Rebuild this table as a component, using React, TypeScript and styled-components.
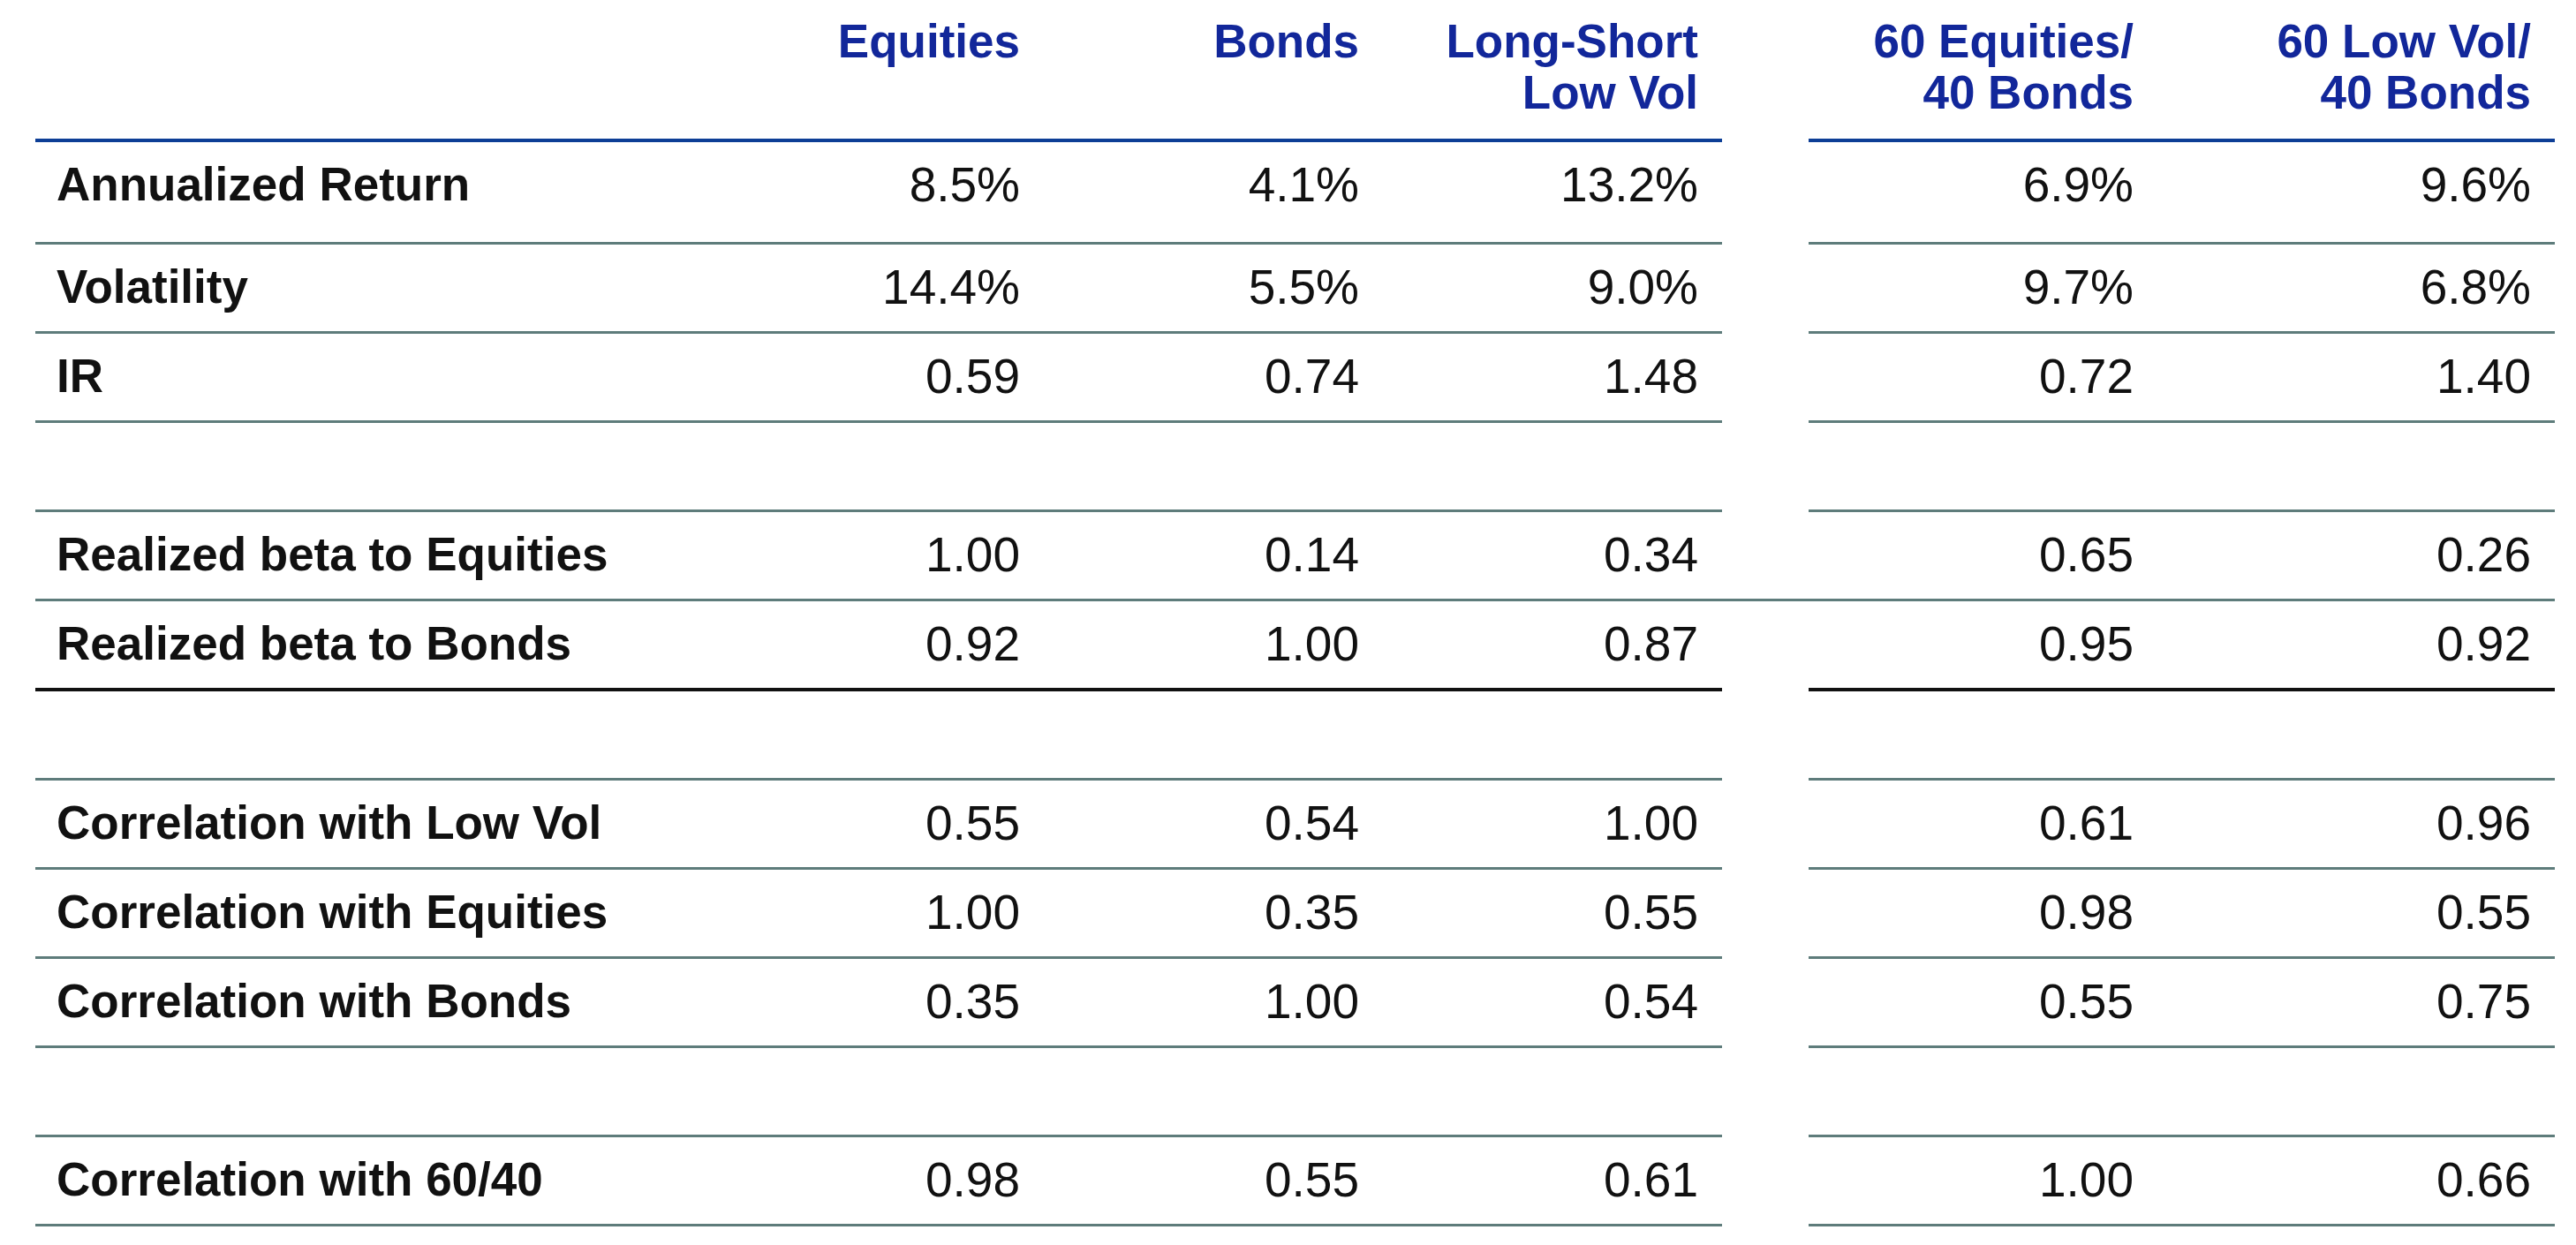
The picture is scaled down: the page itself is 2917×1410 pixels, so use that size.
import styled, { createGlobalStyle } from 'styled-components';

type Rule = 'blue' | 'gray' | 'black' | 'none';

type DataRow = {
  label?: string;
  values?: string[];
  tall?: boolean;
  bridge?: boolean;
  rule?: Rule;
};

const headers = ['Equities', 'Bonds', 'Long-Short\nLow Vol', '60 Equities/\n40 Bonds', '60 Low Vol/\n40 Bonds'];

const rows: DataRow[] = [
  { label: 'Annualized Return', values: ['8.5%', '4.1%', '13.2%', '6.9%', '9.6%'], tall: true },
  { label: 'Volatility', values: ['14.4%', '5.5%', '9.0%', '9.7%', '6.8%'] },
  { label: 'IR', values: ['0.59', '0.74', '1.48', '0.72', '1.40'] },
  {},
  { label: 'Realized beta to Equities', values: ['1.00', '0.14', '0.34', '0.65', '0.26'], bridge: true },
  { label: 'Realized beta to Bonds', values: ['0.92', '1.00', '0.87', '0.95', '0.92'], rule: 'black' },
  {},
  { label: 'Correlation with Low Vol', values: ['0.55', '0.54', '1.00', '0.61', '0.96'] },
  { label: 'Correlation with Equities', values: ['1.00', '0.35', '0.55', '0.98', '0.55'] },
  { label: 'Correlation with Bonds', values: ['0.35', '1.00', '0.54', '0.55', '0.75'] },
  {},
  { label: 'Correlation with 60/40', values: ['0.98', '0.55', '0.61', '1.00', '0.66'] },
];

const GlobalStyle = createGlobalStyle`
  html, body {
    margin: 0;
    padding: 0;
    background: #fff;
  }
  body {
    font-family: "Liberation Sans", Arial, Helvetica, sans-serif;
    color: #111;
  }
`;

const rules: Record<Rule, string> = {
  blue: '4px solid #0d3e96',
  gray: '3px solid #5e7c7b',
  black: '4px solid #111',
  none: '0',
};

const Table = styled.div`
  margin: 0 24px 0 40px;
  width: 2853px;
`;

// label | Equities | Bonds | Long-Short | gap | 60/40 | 60 LV/40
const Row = styled.div`
  display: grid;
  grid-template-columns: 758px 384px 384px 384px 98px 395px 450px;
`;

const Cell = styled.div<{ $rule: Rule; $tall?: boolean; $num?: boolean }>`
  min-height: 58px;
  line-height: 58px;
  padding: 19px 27px ${(p) => (p.$tall ? 36 : 21)}px 24px;
  border-bottom: ${(p) => rules[p.$rule]};
  text-align: ${(p) => (p.$num ? 'right' : 'left')};
  font-size: ${(p) => (p.$num ? 55 : 53)}px;
  font-weight: ${(p) => (p.$num ? 400 : 700)};
  white-space: nowrap;
`;

const Gap = styled.div<{ $rule: Rule }>`
  border-bottom: ${(p) => rules[p.$rule]};
  align-self: end;
`;

const HeadCell = styled.div`
  padding: 18px 27px 23px 24px;
  border-bottom: ${rules.blue};
  text-align: right;
  font-size: 53px;
  line-height: 58px;
  font-weight: 700;
  color: #12279a;
  white-space: pre;
`;

const HeadGap = styled.div``;

const App = () => (
  <>
    <GlobalStyle />
    <Table>
      <Row>
        <HeadCell />
        {headers.slice(0, 3).map((h) => (
          <HeadCell key={h}>{h}</HeadCell>
        ))}
        <HeadGap />
        {headers.slice(3).map((h) => (
          <HeadCell key={h}>{h}</HeadCell>
        ))}
      </Row>
      {rows.map((r, i) => {
        const rule: Rule = r.rule ?? 'gray';
        const vals = r.values ?? ['', '', '', '', ''];
        return (
          <Row key={i}>
            <Cell $rule={rule} $tall={r.tall}>{r.label}</Cell>
            {vals.slice(0, 3).map((v, j) => (
              <Cell key={j} $rule={rule} $tall={r.tall} $num>{v}</Cell>
            ))}
            <Gap $rule={r.bridge ? rule : 'none'} />
            {vals.slice(3).map((v, j) => (
              <Cell key={j + 3} $rule={rule} $tall={r.tall} $num>{v}</Cell>
            ))}
          </Row>
        );
      })}
    </Table>
  </>
);

export default App;
